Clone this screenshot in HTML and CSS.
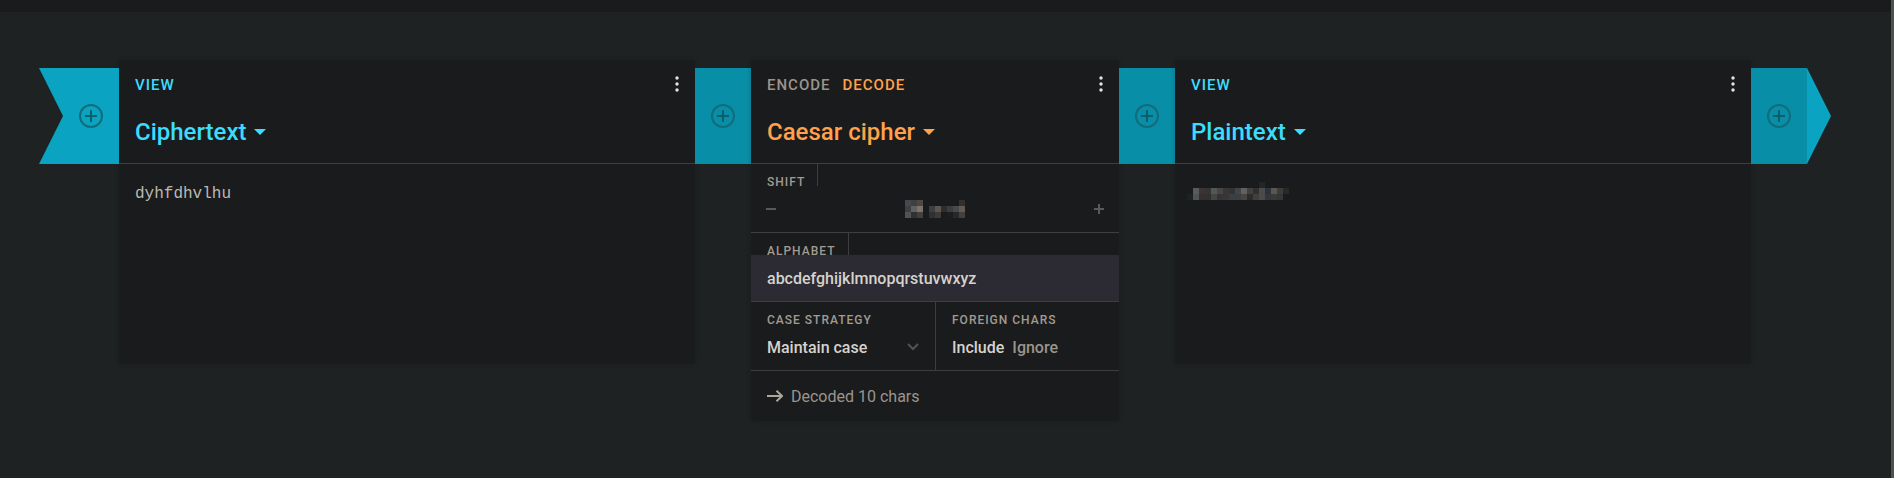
FILE: index.html
```
<!DOCTYPE html>
<html lang="en">
<head>
<meta charset="utf-8">
<title>Caesar cipher pipeline</title>
<link rel="stylesheet" href="styles.css">
</head>
<body>
<div class="topbar"></div>
<main class="pipeline">
  <div class="connector connector-start">
    <svg class="add" viewBox="0 0 24 24"><circle cx="12" cy="12" r="11"/><path d="M12 6v12M6 12h12"/></svg>
  </div>
  <section class="brick viewer">
    <header class="head cyan">
      <div class="modes"><span class="mode">VIEW</span><svg class="menu" viewBox="0 0 4 16"><circle cx="2" cy="2" r="1.7"/><circle cx="2" cy="8" r="1.7"/><circle cx="2" cy="14" r="1.7"/></svg></div>
      <h2 class="title">Ciphertext<i class="caret"></i></h2>
    </header>
    <div class="content">dyhfdhvlhu</div>
  </section>
  <div class="connector">
    <svg class="add" viewBox="0 0 24 24"><circle cx="12" cy="12" r="11"/><path d="M12 6v12M6 12h12"/></svg>
  </div>
  <section class="brick encoder">
    <header class="head orange">
      <div class="modes"><span class="mode muted">ENCODE</span><span class="mode">DECODE</span><svg class="menu" viewBox="0 0 4 16"><circle cx="2" cy="2" r="1.7"/><circle cx="2" cy="8" r="1.7"/><circle cx="2" cy="14" r="1.7"/></svg></div>
      <h2 class="title">Caesar cipher<i class="caret"></i></h2>
    </header>
    <div class="field">
      <div class="label tabbed">SHIFT</div>
      <div class="stepper">
        <svg class="step" viewBox="0 0 10 10"><path d="M0 5h10"/></svg>
        <svg class="shift-value" viewBox="0 0 10 3" shape-rendering="crispEdges">
          <path fill="#45484c" d="M0 0h1v1H0z"/><path fill="#3e3f3f" d="M1 0h1v1H1z"/><path fill="#4c4843" d="M2 0h1v1H2z"/>
          <path fill="#3c4146" d="M0 1h1v1H0z"/><path fill="#606161" d="M1 1h1v1H1z"/><path fill="#7c736d" d="M2 1h1v1H2z"/>
          <path fill="#535355" d="M0 2h1v1H0z"/><path fill="#303232" d="M1 2h1v1H1z"/><path fill="#42403d" d="M2 2h1v1H2z"/>
          <path fill="#303030" d="M9 0h1v1H9z"/>
          <path fill="#3c3f41" d="M4 1h1v1H4z"/><path fill="#5c564c" d="M5 1h1v1H5z"/><path fill="#2c2d2d" d="M6 1h1v1H6z"/><path fill="#3d3d3d" d="M7 1h1v1H7z"/><path fill="#4a4947" d="M8 1h1v1H8z"/><path fill="#645a51" d="M9 1h1v1H9z"/>
          <path fill="#303132" d="M4 2h1v1H4z"/><path fill="#3d3b36" d="M5 2h1v1H5z"/><path fill="#1c1d1e" d="M7 2h1v1H7z"/><path fill="#25292c" d="M8 2h1v1H8z"/><path fill="#43413d" d="M9 2h1v1H9z"/>
        </svg>
        <svg class="step" viewBox="0 0 10 10"><path d="M0 5h10M5 0v10"/></svg>
      </div>
    </div>
    <div class="field">
      <div class="label tabbed tabbed-wide">ALPHABET</div>
      <div class="value highlight">abcdefghijklmnopqrstuvwxyz</div>
    </div>
    <div class="split">
      <div class="field half">
        <div class="label">CASE STRATEGY</div>
        <div class="value select">Maintain case<svg class="chevron" viewBox="0 0 12 8"><path d="M1 1l5 5 5-5"/></svg></div>
      </div>
      <div class="field">
        <div class="label">FOREIGN CHARS</div>
        <div class="value options"><span>Include</span><span class="off">Ignore</span></div>
      </div>
    </div>
    <footer class="status"><svg class="arrow" viewBox="0 0 16 12"><path d="M0 6h15M9.500 .7L15 6l-5.500 5.300"/></svg>Decoded 10 chars</footer>
  </section>
  <div class="connector">
    <svg class="add" viewBox="0 0 24 24"><circle cx="12" cy="12" r="11"/><path d="M12 6v12M6 12h12"/></svg>
  </div>
  <section class="brick viewer">
    <header class="head cyan">
      <div class="modes"><span class="mode">VIEW</span><svg class="menu" viewBox="0 0 4 16"><circle cx="2" cy="2" r="1.7"/><circle cx="2" cy="8" r="1.7"/><circle cx="2" cy="14" r="1.7"/></svg></div>
      <h2 class="title">Plaintext<i class="caret"></i></h2>
    </header>
    <div class="content">
      <svg class="plain-value" viewBox="0 0 17 3" shape-rendering="crispEdges">
        <path fill="#242626" d="M12 0h1v1h-1z"/>
        <path fill="#585b59" d="M1 1h1v1H1z"/><path fill="#3a3532" d="M2 1h1v1H2z"/><path fill="#353433" d="M3 1h1v1H3z"/><path fill="#53575a" d="M4 1h1v1H4z"/><path fill="#474645" d="M5 1h1v1H5z"/><path fill="#393634" d="M6 1h1v1H6z"/><path fill="#313335" d="M7 1h1v1H7z"/><path fill="#424445" d="M8 1h1v1H8z"/><path fill="#62615f" d="M9 1h1v1H9z"/><path fill="#423f3d" d="M10 1h1v1h-1z"/><path fill="#303031" d="M11 1h1v1h-1z"/><path fill="#4b4b4b" d="M12 1h1v1h-1z"/><path fill="#2c343b" d="M13 1h1v1h-1z"/><path fill="#5b574f" d="M14 1h1v1h-1z"/><path fill="#3b3d3d" d="M15 1h1v1h-1z"/><path fill="#2a2725" d="M16 1h1v1h-1z"/>
        <path fill="#1b2228" d="M0 2h1v1H0z"/><path fill="#505452" d="M1 2h1v1H1z"/><path fill="#33302e" d="M2 2h2v1H2z"/><path fill="#454546" d="M4 2h1v1H4z"/><path fill="#353538" d="M5 2h1v1H5z"/><path fill="#393735" d="M6 2h1v1H6z"/><path fill="#3b3f41" d="M7 2h2v1H7z"/><path fill="#474540" d="M9 2h1v1H9z"/><path fill="#2a2c2e" d="M10 2h1v1h-1z"/><path fill="#423e3a" d="M11 2h1v1h-1z"/><path fill="#4a4a4b" d="M12 2h1v1h-1z"/><path fill="#353638" d="M13 2h1v1h-1z"/><path fill="#3b3937" d="M14 2h1v1h-1z"/><path fill="#343637" d="M15 2h1v1h-1z"/>
      </svg>
    </div>
  </section>
  <div class="connector">
    <svg class="add" viewBox="0 0 24 24"><circle cx="12" cy="12" r="11"/><path d="M12 6v12M6 12h12"/></svg>
  </div>
  <div class="connector-end"></div>
</main>
<div class="scrollbar"></div>
</body>
</html>
```
FILE: styles.css
```
* { box-sizing: border-box; }
body {
  margin: 0;
  height: 478px;
  overflow: hidden;
  display: grid;
  grid-template: 12px 1fr / 1fr 3px;
  background: #1e2222;
  font-family: Roboto, sans-serif;
  color: #d6d2cc;
}
.topbar { background: #1a1b1d; }
.scrollbar { grid-area: 1 / 2 / 3 / 3; background: #505252; }
.pipeline {
  grid-area: 2 / 1;
  display: flex;
  align-items: flex-start;
  padding: 48px 0 0 39px;
}
svg { display: block; flex: none; fill: none; }
.connector {
  flex: none;
  width: 56px;
  height: 96px;
  margin-top: 8px;
  display: flex;
  align-items: center;
  justify-content: center;
  background: #098ea8;
}
.connector-start {
  width: 80px;
  padding-left: 24px;
  background: #0aa3c1;
  clip-path: polygon(0 0, 100% 0, 100% 100%, 0 100%, 24px 50%);
}
.connector-end {
  width: 24px;
  height: 96px;
  margin-top: 8px;
  background: #0aa3c1;
  clip-path: polygon(0 0, 100% 50%, 0 100%);
}
.add { width: 24px; height: 24px; stroke: #126c7c; stroke-width: 2; }
.add path { stroke: #0d5e6c; }
.brick {
  flex: none;
  background: #1a1b1d;
  border-radius: 3px;
  box-shadow: 0 0 4px rgba(20, 20, 22, .25);
}
.viewer { width: 576px; height: 304px; }
.encoder { width: 368px; height: 361px; }
.head { height: 104px; padding: 13px 16px 0; border-bottom: 1px solid #3d3e40; }
.cyan { color: #3ddcff; }
.orange { color: #ffa24a; }
.modes {
  display: flex;
  align-items: center;
  gap: 13px;
  height: 22px;
  font-size: 15px;
  font-weight: 500;
  letter-spacing: 1px;
}
.mode { margin-right: -1px; padding-top: 2px; }
.muted { color: #9a958c; }
.menu { width: 4px; height: 16px; margin-left: auto; fill: #e6e4e0; }
.title {
  display: flex;
  align-items: center;
  margin: 21px 0 0;
  height: 32px;
  font-size: 24px;
  font-weight: 500;
}
.caret {
  margin-left: 8px;
  border: 6px solid transparent;
  border-top-color: currentColor;
  border-bottom: 0;
}
.content {
  padding: 18px 16px;
  font: 16px/24px "Liberation Mono", monospace;
  color: #bdb8b0;
}
.plain-value { width: 102px; height: 18px; margin-left: -4px; }
.field { height: 69px; border-bottom: 1px solid #3d3e40; }
.label {
  height: 22px;
  padding: 8px 12px 0 16px;
  font-size: 12px;
  line-height: 20px;
  font-weight: 500;
  letter-spacing: 1px;
  color: #a19b91;
  white-space: nowrap;
}
.tabbed { width: max-content; border-right: 1px solid #3d3e40; }
.tabbed-wide { padding-right: 12.500px; }
.value {
  height: 46px;
  padding: 0 16px;
  display: flex;
  align-items: center;
  font-size: 16px;
  font-weight: 500;
}
.highlight { position: relative; background: #2c2a33; }
.stepper {
  height: 46px;
  padding: 0 15px;
  display: flex;
  align-items: center;
  justify-content: space-between;
}
.step { width: 10px; height: 10px; stroke: #565b5e; stroke-width: 2; }
.shift-value { width: 60px; height: 18px; }
.split { display: grid; grid-template-columns: 185px 1fr; }
.half { border-right: 1px solid #3d3e40; }
.select { justify-content: space-between; }
.chevron { width: 12px; height: 8px; stroke: #4d5456; stroke-width: 2; }
.options { gap: 8px; }
.off { color: #9a958c; }
.status {
  height: 50px;
  padding: 0 16px;
  display: flex;
  align-items: center;
  gap: 8px;
  font-size: 16px;
  color: #9a958c;
}
.arrow { width: 16px; height: 12px; stroke: #aca69b; stroke-width: 2; }
```
